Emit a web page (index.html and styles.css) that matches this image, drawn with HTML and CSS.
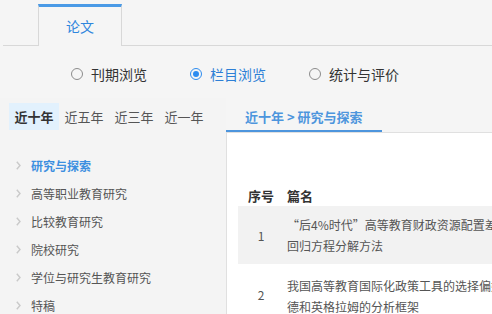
FILE: index.html
```html
<!DOCTYPE html>
<html lang="zh-CN">
<head>
    <meta charset="UTF-8">
    <title>论文 - 栏目浏览</title>
    <link rel="stylesheet" href="styles.css">
</head>
<body>
    <div class="tabs">
        <div class="tab active">论文</div>
    </div>

    <div class="modes">
        <label class="mode"><span class="radio"></span>刊期浏览</label>
        <label class="mode checked"><span class="radio"></span>栏目浏览</label>
        <label class="mode"><span class="radio"></span>统计与评价</label>
    </div>

    <div class="main">
        <div class="side">
            <div class="years">
                <span class="year active">近十年</span>
                <span class="year">近五年</span>
                <span class="year">近三年</span>
                <span class="year">近一年</span>
            </div>
            <ul class="columns">
                <li class="active"><svg width="5" height="9" viewBox="0 0 5 9"><polyline points="0.8,0.8 4,4.5 0.8,8.2" fill="none" stroke="#c9c9c9" stroke-width="1.4"/></svg>研究与探索</li>
                <li><svg width="5" height="9" viewBox="0 0 5 9"><polyline points="0.8,0.8 4,4.5 0.8,8.2" fill="none" stroke="#c9c9c9" stroke-width="1.4"/></svg>高等职业教育研究</li>
                <li><svg width="5" height="9" viewBox="0 0 5 9"><polyline points="0.8,0.8 4,4.5 0.8,8.2" fill="none" stroke="#c9c9c9" stroke-width="1.4"/></svg>比较教育研究</li>
                <li><svg width="5" height="9" viewBox="0 0 5 9"><polyline points="0.8,0.8 4,4.5 0.8,8.2" fill="none" stroke="#c9c9c9" stroke-width="1.4"/></svg>院校研究</li>
                <li><svg width="5" height="9" viewBox="0 0 5 9"><polyline points="0.8,0.8 4,4.5 0.8,8.2" fill="none" stroke="#c9c9c9" stroke-width="1.4"/></svg>学位与研究生教育研究</li>
                <li><svg width="5" height="9" viewBox="0 0 5 9"><polyline points="0.8,0.8 4,4.5 0.8,8.2" fill="none" stroke="#c9c9c9" stroke-width="1.4"/></svg>特稿</li>
            </ul>
        </div>

        <div class="content">
            <div class="crumb-bar">
                <span class="crumb">近十年 &gt; 研究与探索</span>
            </div>
            <div class="panel">
                <div class="row head">
                    <div class="num">序号</div>
                    <div class="title">篇名</div>
                </div>
                <div class="row odd">
                    <div class="num">1</div>
                    <div class="title">“后4%时代”高等教育财政资源配置差异研究——基于<br>回归方程分解方法</div>
                </div>
                <div class="row">
                    <div class="num">2</div>
                    <div class="title">我国高等教育国际化政策工具的选择偏好——基于施耐<br>德和英格拉姆的分析框架</div>
                </div>
            </div>
        </div>
    </div>
</body>
</html>
```

FILE: styles.css
```css
body {
    margin: 0;
    width: 492px;
    height: 314px;
    overflow: hidden;
    background: #f5f5f5;
    font-family: "Noto Sans CJK SC", "Liberation Sans", sans-serif;
    color: #333;
}
.tabs {
    display: flex;
    margin-left: 3px;
    padding: 4px 0 0 35px;
    border-bottom: 1px solid #d8d8d8;
}
.tab {
    width: 82px;
    height: 39px;
    line-height: 39px;
    text-align: center;
    font-size: 14px;
    color: #2f86dd;
    background: #f5f5f5;
    border-top: 3px solid #4a9ae6;
    border-left: 1px solid #d8d8d8;
    border-right: 1px solid #d8d8d8;
    margin-bottom: -1px;
}
.modes {
    display: flex;
    gap: 43px;
    padding: 18px 0 14px 71px;
    line-height: 20px;
    font-size: 14px;
}
.mode {
    display: flex;
    align-items: center;
    gap: 8px;
}
.radio {
    width: 10px;
    height: 10px;
    border: 1.5px solid #8c8c8c;
    border-radius: 50%;
    display: flex;
    align-items: center;
    justify-content: center;
}
.mode.checked {
    color: #2d7fd6;
}
.mode.checked .radio {
    border-color: #2d8cf0;
}
.mode.checked .radio::after {
    content: "";
    width: 6px;
    height: 6px;
    border-radius: 50%;
    background: #2d8cf0;
}
.main {
    display: flex;
}
.side {
    width: 226px;
    flex-shrink: 0;
    background: #f4f4f4;
    padding-top: 5px;
}
.years {
    display: flex;
    padding-left: 9px;
}
.year {
    width: 50px;
    height: 27px;
    line-height: 27px;
    text-align: center;
    font-size: 13px;
    color: #555;
}
.year.active {
    background: #e2f1fd;
    color: #333;
    font-weight: bold;
}
.columns {
    list-style: none;
    margin: 21px 0 0 0;
    padding: 0 0 0 16px;
}
.columns li {
    display: flex;
    align-items: center;
    gap: 10px;
    height: 28px;
    font-size: 12px;
    color: #555;
}
.columns li.active {
    color: #3c8fe0;
    font-weight: bold;
}
.content {
    flex: 1;
    min-width: 0;
}
.crumb-bar {
    display: flex;
    padding-top: 9px;
}
.crumb {
    display: block;
    padding: 0 19px 3px 19px;
    line-height: 20px;
    font-size: 13px;
    color: #4d95dd;
    font-weight: bold;
    border-bottom: 2px solid #4d95dd;
}
.panel {
    background: #fff;
    border-top: 1px solid #e0e0e0;
    border-left: 1px solid #e0e0e0;
    padding: 52px 0 0 11px;
    height: 200px;
}
.row {
    display: flex;
    align-items: center;
    white-space: nowrap;
    font-size: 12px;
    color: #555;
}
.row.head {
    line-height: 21px;
    font-size: 13px;
    font-weight: bold;
    color: #333;
}
.row.odd {
    background: #f2f2f2;
}
.row .num {
    width: 46px;
    flex-shrink: 0;
    text-align: center;
}
.row .title {
    padding: 8px 0 8px 3px;
    line-height: 21px;
}
.row.head .title {
    padding: 0 0 0 3px;
}
.row:last-child .title {
    padding-top: 11px;
}
```
